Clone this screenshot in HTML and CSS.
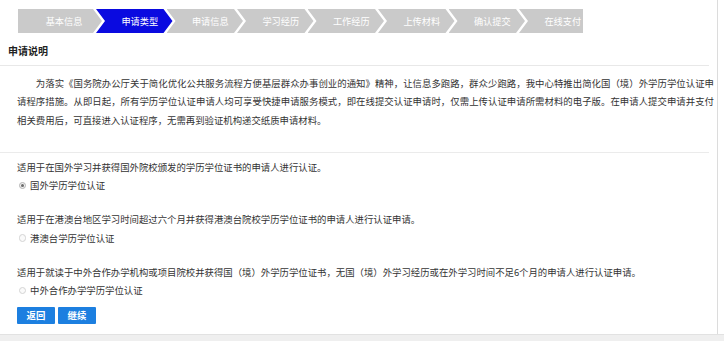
FILE: index.html
```html
<!DOCTYPE html>
<html lang="zh-CN">
<head>
<meta charset="utf-8">
<title>申请类型</title>
<link rel="stylesheet" href="styles.css">
</head>
<body>
<div class="page">
  <div class="steps">
    <div class="step first">基本信息</div>
    <div class="step active">申请类型</div>
    <div class="step">申请信息</div>
    <div class="step">学习经历</div>
    <div class="step">工作经历</div>
    <div class="step">上传材料</div>
    <div class="step">确认提交</div>
    <div class="step">在线支付</div>
  </div>
  <div class="section-title">申请说明</div>
  <div class="notice">
    <p>为落实《国务院办公厅关于简化优化公共服务流程方便基层群众办事创业的通知》精神，让信息多跑路，群众少跑路，我中心特推出简化国（境）外学历学位认证申请程序措施。从即日起，所有学历学位认证申请人均可享受快捷申请服务模式，即在线提交认证申请时，仅需上传认证申请所需材料的电子版。在申请人提交申请并支付相关费用后，可直接进入认证程序，无需再到验证机构递交纸质申请材料。</p>
  </div>
  <div class="options">
    <div class="option">
      <div class="desc">适用于在国外学习并获得国外院校颁发的学历学位证书的申请人进行认证。</div>
      <div class="radio-row"><span class="radio checked"></span>国外学历学位认证</div>
    </div>
    <div class="option">
      <div class="desc">适用于在港澳台地区学习时间超过六个月并获得港澳台院校学历学位证书的申请人进行认证申请。</div>
      <div class="radio-row"><span class="radio"></span>港澳台学历学位认证</div>
    </div>
    <div class="option">
      <div class="desc">适用于就读于中外合作办学机构或项目院校并获得国（境）外学历学位证书，无国（境）外学习经历或在外学习时间不足6个月的申请人进行认证申请。</div>
      <div class="radio-row"><span class="radio"></span>中外合作办学学历学位认证</div>
    </div>
  </div>
  <div class="actions">
    <button class="btn">返回</button>
    <button class="btn">继续</button>
  </div>
</div>
<div class="strip"></div>
</body>
</html>
```
FILE: styles.css
```css
* { box-sizing: border-box; }
html, body { margin: 0; padding: 0; background: #fff; }
body {
  font-family: "Noto Sans CJK SC", "Microsoft YaHei", sans-serif;
  color: #333;
  font-size: 9.4px;
  text-spacing-trim: space-all;
}
.page {
  width: 718px;
  height: 334px;
  border-right: 1px solid #dcdcdc;
  padding-top: 9px;
}
.steps {
  display: flex;
  margin-left: 18px;
  width: 565px;
  height: 24px;
  overflow: hidden;
}
.step {
  flex: 0 0 76.5px;
  height: 24px;
  margin-left: -6px;
  padding-left: 11px;
  background: #cacaca;
  color: #fff;
  font-size: 9.2px;
  line-height: 24px;
  text-align: center;
  white-space: nowrap;
  clip-path: polygon(0 0, 67.5px 0, 100% 50%, 67.5px 100%, 0 100%, 9px 50%);
}
.step.first {
  flex-basis: 84px;
  margin-left: 0;
  padding-left: 8px;
  clip-path: polygon(0 0, 75px 0, 100% 50%, 75px 100%, 0 100%);
}
.step.active { background: #0a0ae0; }
.section-title {
  width: 709px;
  padding: 4px 0 0 8px;
  line-height: 28px;
  font-size: 10px;
  font-weight: bold;
  color: #222;
  border-bottom: 1px solid #e8e8e8;
}
.notice {
  width: 709px;
  height: 87px;
  border-bottom: 1px solid #ebebeb;
}
.notice p {
  margin: 0 0 0 17px;
  padding-top: 7.75px;
  width: 697px;
  text-indent: 2em;
  line-height: 18.5px;
  text-align: justify;
}
.options { padding-top: 4.5px; }
.option {
  padding-left: 17px;
  line-height: 18.5px;
  margin-bottom: 15.5px;
  white-space: nowrap;
}
.option:last-child { margin-bottom: 0; }
.radio-row {
  display: flex;
  align-items: center;
  height: 18.5px;
}
.radio {
  width: 7.5px;
  height: 7.5px;
  margin-left: 1.5px;
  margin-right: 4px;
  border-radius: 50%;
  border: 1px solid #d4d4d4;
  background: #fafafa;
  display: flex;
  align-items: center;
  justify-content: center;
}
.radio.checked {
  border-color: #b4b4b4;
  background: #f0f0f0;
}
.radio.checked::after {
  content: "";
  width: 3px;
  height: 3px;
  border-radius: 50%;
  background: #6a6a6a;
}
.actions {
  display: flex;
  gap: 3px;
  padding-left: 17px;
  margin-top: 7.5px;
}
.btn {
  width: 38px;
  height: 17px;
  padding: 0;
  border: 0;
  border-radius: 1px;
  background: #1c7fe0;
  color: #fff;
  font-family: "Noto Sans CJK SC", "Microsoft YaHei", sans-serif;
  font-size: 9.4px;
  font-weight: bold;
  line-height: 17px;
}
.strip {
  height: 7px;
  background: #efefef;
  border-top: 1px solid #e2e2e2;
}
```
